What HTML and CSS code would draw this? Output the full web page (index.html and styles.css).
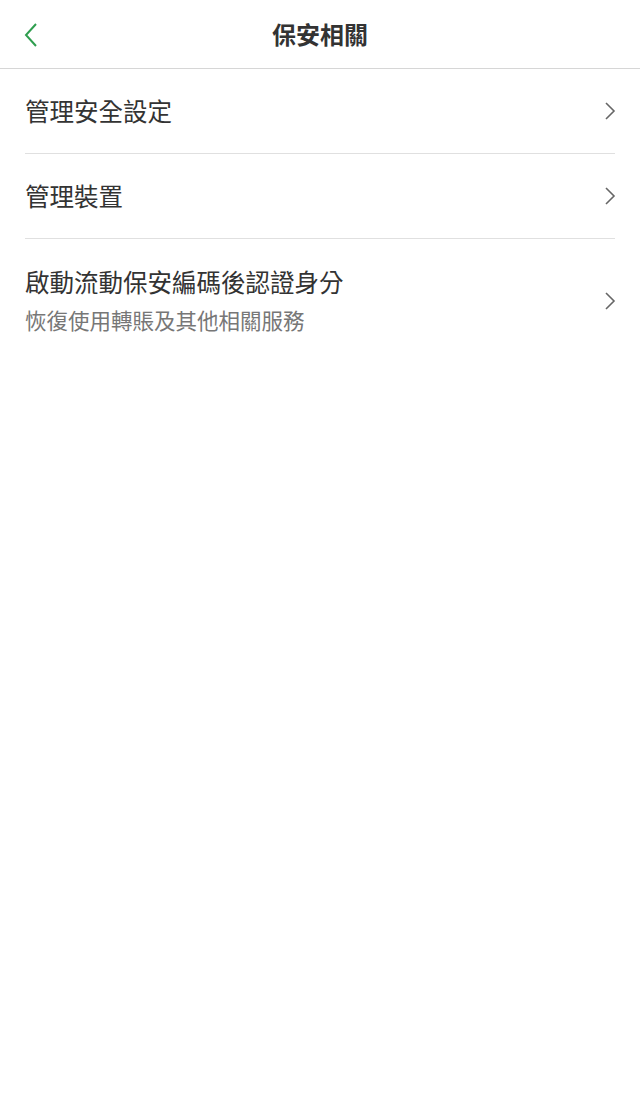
FILE: index.html
```html
<!DOCTYPE html>
<html lang="zh-Hant">
<head>
    <meta charset="UTF-8">
    <title>保安相關</title>
    <link rel="stylesheet" href="styles.css">
</head>
<body>
    <div class="page">
        <div class="top-bar">
            <span class="back">
                <svg width="16" height="26" viewBox="0 0 16 26">
                    <path d="M13 2 L3 13 L13 24" fill="none" stroke="#2f9e4f" stroke-width="2"/>
                </svg>
            </span>
            <h1 class="title">保安相關</h1>
        </div>
        <ul class="menu">
            <li class="menu-item">
                <div class="item-text">
                    <div class="item-title">管理安全設定</div>
                </div>
                <svg class="arrow" width="12" height="20" viewBox="0 0 12 20">
                    <path d="M2 2 L10 10 L2 18" fill="none" stroke="#666" stroke-width="1.6"/>
                </svg>
            </li>
            <li class="menu-item">
                <div class="item-text">
                    <div class="item-title">管理裝置</div>
                </div>
                <svg class="arrow" width="12" height="20" viewBox="0 0 12 20">
                    <path d="M2 2 L10 10 L2 18" fill="none" stroke="#666" stroke-width="1.6"/>
                </svg>
            </li>
            <li class="menu-item tall">
                <div class="item-text">
                    <div class="item-title">啟動流動保安編碼後認證身分</div>
                    <div class="item-sub">恢復使用轉賬及其他相關服務</div>
                </div>
                <svg class="arrow" width="12" height="20" viewBox="0 0 12 20">
                    <path d="M2 2 L10 10 L2 18" fill="none" stroke="#666" stroke-width="1.6"/>
                </svg>
            </li>
        </ul>
    </div>
</body>
</html>
```

FILE: styles.css
```css
*{
    margin: 0;
    padding: 0;
}
ul{
    list-style: none;
}
body{
    background: #fff;
    font-family: "Noto Sans CJK TC", "Noto Sans", sans-serif;
    color: #333;
}
.top-bar{
    height: 68px;
    border-bottom: 1px solid #d6d6d6;
    display: flex;
    align-items: center;
    justify-content: center;
    position: relative;
}
.back{
    position: absolute;
    left: 23px;
    top: 22px;
    display: flex;
}
.title{
    font-size: 24px;
    font-weight: bold;
    color: #333;
    line-height: 1;
}
.menu{
    padding: 0 25px;
}
.menu-item{
    height: 84px;
    border-bottom: 1px solid #e0e0e0;
    display: flex;
    align-items: center;
    justify-content: space-between;
}
.menu-item.tall{
    height: 126px;
    border-bottom: none;
    align-items: flex-start;
    padding-top: 26px;
    box-sizing: border-box;
}
.item-title{
    font-size: 24.5px;
    line-height: 34px;
    color: #333;
}
.item-sub{
    font-size: 21.5px;
    line-height: 30px;
    margin-top: 6px;
    color: #777;
}
.tall .arrow{
    margin-top: 26px;
}
.arrow{
    margin-right: -1px;
}
```
